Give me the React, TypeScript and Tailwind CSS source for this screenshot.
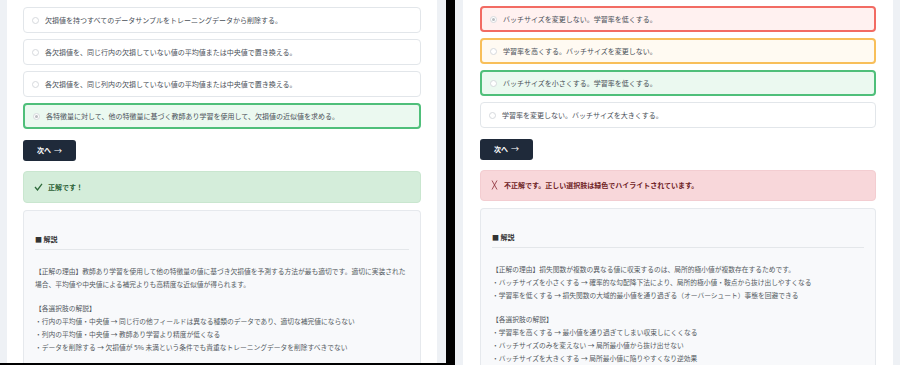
import React from "react";

type Tone = "plain" | "green" | "red" | "orange";

type Choice = { text: string; tone: Tone; checked?: boolean };

const toneClass: Record<Tone, string> = {
  plain: "border border-[#e2e6ea] bg-white",
  green: "border-2 border-[#4fbf7a] bg-[#ebf9f0]",
  red: "border-2 border-[#f26b63] bg-[#fff1f0]",
  orange: "border-2 border-[#f8bf5a] bg-[#fffaf2]",
};

function Option({ choice }: { choice: Choice }) {
  return (
    <div
      className={`h-[26px] rounded-[4px] flex items-center pl-[8px] ${toneClass[choice.tone]}`}
    >
      <span className="w-[7px] h-[7px] rounded-full border border-[#d6d9dd] bg-white flex items-center justify-center shrink-0">
        {choice.checked && <span className="w-[3px] h-[3px] rounded-full bg-[#b9bcc0]" />}
      </span>
      <span className="ml-[6px] text-[7px] text-[#4a5058] leading-none">{choice.text}</span>
    </div>
  );
}

function Panel({
  choices,
  correct,
  lines,
  top,
  pad,
}: {
  choices: Choice[];
  correct: boolean;
  lines: (string | null)[];
  top: string;
  pad: string;
}) {
  return (
    <div className={`w-[430px] h-full bg-white ${pad} ${top} flex flex-col`}>
      <div className="flex flex-col gap-[6px]">
        {choices.map((c, i) => (
          <Option key={i} choice={c} />
        ))}
      </div>

      <button className="mt-[11px] w-[53px] h-[21px] rounded-[3px] bg-[#1f2a3a] text-white text-[7px] font-bold flex items-center justify-center gap-[3px]">
        次へ <span className="text-[8px] font-normal">→</span>
      </button>

      {correct ? (
        <div className="mt-[10px] h-[32px] rounded-[4px] bg-[#d4edda] border border-[#c9e6cf] flex items-center pl-[10px]">
          <svg width="9" height="8" viewBox="0 0 9 8" className="mr-[5px]">
            <path d="M1 4 L3.5 7 L8 0.8" fill="none" stroke="#2e6b3b" strokeWidth="1.3" />
          </svg>
          <span className="text-[7px] font-bold text-[#2b5f36]">正解です！</span>
        </div>
      ) : (
        <div className="mt-[10px] h-[32px] rounded-[4px] bg-[#f8d7da] border border-[#f3cdd1] flex items-center pl-[10px]">
          <svg width="7" height="10" viewBox="0 0 7 10" className="mr-[6px]">
            <path d="M1 0.5 L6 9.5 M6 0.5 Q3.5 5 1 9.5" fill="none" stroke="#8a2a33" strokeWidth="0.8" />
          </svg>
          <span className="text-[7px] font-bold text-[#6e1c24]">
            不正解です。正しい選択肢は緑色でハイライトされています。
          </span>
        </div>
      )}

      <div className="mt-[7px] flex-1 rounded-t-[4px] bg-[#f8f9fb] border border-[#e6e9ed] border-b-0 px-[11px] pt-[22px]">
        <div className="text-[7px] font-bold text-[#333] leading-[12px] pb-[4px] border-b border-[#e4e7ea]">
          ■ 解説
        </div>
        <div className="mt-[15px] text-[6.75px] leading-[13px] text-[#555b62]">
          {lines.map((l, i) =>
            l === null ? <div key={i} className="h-[11px]" /> : <div key={i}>{l}</div>
          )}
        </div>
      </div>
    </div>
  );
}

export default function App() {
  const leftChoices: Choice[] = [
    { text: "欠損値を持つすべてのデータサンプルをトレーニングデータから削除する。", tone: "plain" },
    { text: "各欠損値を、同じ行内の欠損していない値の平均値または中央値で置き換える。", tone: "plain" },
    { text: "各欠損値を、同じ列内の欠損していない値の平均値または中央値で置き換える。", tone: "plain" },
    {
      text: "各特徴量に対して、他の特徴量に基づく教師あり学習を使用して、欠損値の近似値を求める。",
      tone: "green",
      checked: true,
    },
  ];

  const rightChoices: Choice[] = [
    { text: "バッチサイズを変更しない。学習率を低くする。", tone: "red", checked: true },
    { text: "学習率を高くする。バッチサイズを変更しない。", tone: "orange" },
    { text: "バッチサイズを小さくする。学習率を低くする。", tone: "green" },
    { text: "学習率を変更しない。バッチサイズを大きくする。", tone: "plain" },
  ];

  const leftLines = [
    "【正解の理由】教師あり学習を使用して他の特徴量の値に基づき欠損値を予測する方法が最も適切です。適切に実装された場合、平均値や中央値による補完よりも高精度な近似値が得られます。",
    null,
    "【各選択肢の解説】",
    "・行内の平均値・中央値 → 同じ行の他フィールドは異なる種類のデータであり、適切な補完値にならない",
    "・列内の平均値・中央値 → 教師あり学習より精度が低くなる",
    "・データを削除する → 欠損値が 5% 未満という条件でも貴重なトレーニングデータを削除すべきでない",
  ];

  const rightLines = [
    "【正解の理由】損失関数が複数の異なる値に収束するのは、局所的極小値が複数存在するためです。",
    "・バッチサイズを小さくする → 確率的な勾配降下法により、局所的極小値・鞍点から抜け出しやすくなる",
    "・学習率を低くする → 損失関数の大域的最小値を通り過ぎる（オーバーシュート）事態を回避できる",
    null,
    "【各選択肢の解説】",
    "・学習率を高くする → 最小値を通り過ぎてしまい収束しにくくなる",
    "・バッチサイズのみを変えない → 局所最小値から抜け出せない",
    "・バッチサイズを大きくする → 局所最小値に陥りやすくなり逆効果",
  ];

  return (
    <div
      className="w-[900px] h-[365px] bg-black flex overflow-hidden"
      style={{ fontFamily: '"Noto Sans CJK JP", "Noto Sans", sans-serif' }}
    >
      <div className="w-[446px] h-[363px] bg-[#eef1f5] pl-[7px] shrink-0">
        <Panel choices={leftChoices} correct lines={leftLines} top="pt-[7px]" pad="px-[16px]" />
      </div>
      <div className="w-[9px] shrink-0" />
      <div className="w-[445px] h-[365px] bg-[#eef1f5] pl-[8px] shrink-0">
        <Panel choices={rightChoices} correct={false} lines={rightLines} top="pt-[6px]" pad="px-[17px]" />
      </div>
    </div>
  );
}
